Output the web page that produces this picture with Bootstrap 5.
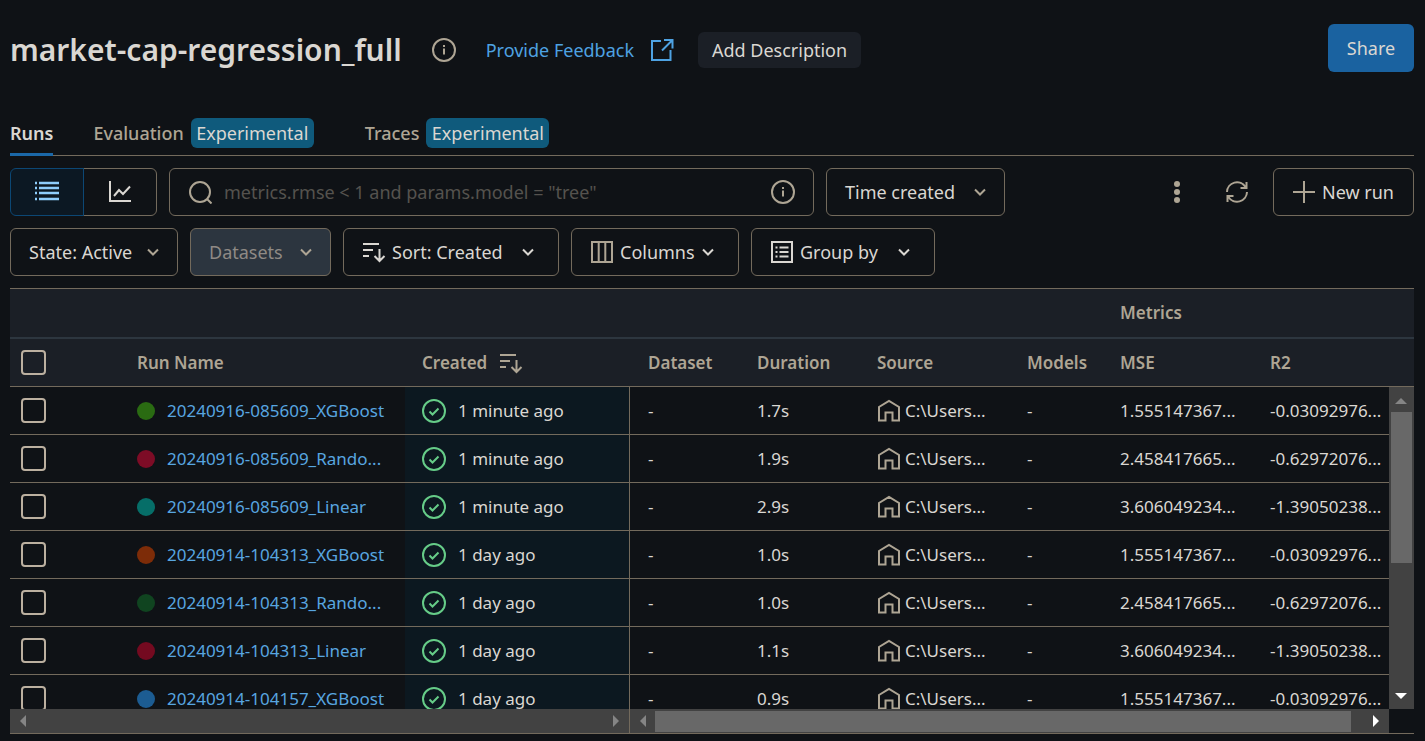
<!DOCTYPE html>
<html lang="en">
<head>
<meta charset="utf-8">
<meta name="viewport" content="width=device-width, initial-scale=1">
<title>market-cap-regression_full</title>
<link href="https://cdn.jsdelivr.net/npm/bootstrap@5.3.0/dist/css/bootstrap.min.css" rel="stylesheet">
<style>
:root{--page:#0f1216;--panel:#1b1f26;--line:#736a5c;--ink:#dad7d2;--dim:#aea594;--sky:#4ea2e2}
body{background:var(--page);color:var(--ink);font-family:"Noto Sans","Open Sans",sans-serif;font-size:18px;line-height:24px}
.page{padding:24px 11px 7px 10px;height:100vh}
.page > *{flex-shrink:0}
svg{flex:none;fill:none;stroke:currentColor;stroke-width:2}
.ico{width:24px;height:24px}
.chev{width:12px;height:24px}
.dim{color:var(--dim)}
.page-title{font-size:30px;line-height:48px;font-weight:600;margin:0 30px 0 0}
.top-row{height:52px}
.feedback{color:var(--sky);text-decoration:none;margin-left:30px;gap:16px}
.btn{--bs-btn-font-size:18px;--bs-btn-line-height:24px;--bs-btn-color:var(--ink);--bs-btn-border-radius:6px;--bs-btn-hover-color:#fff;white-space:nowrap}
.btn-desc{background:var(--panel);padding:6px 11px;margin-left:24px;height:36px;width:163px}
.btn-share{background:#1a62a0;height:48px;width:86px}
.tool{border:1px solid var(--line);height:48px;padding:0 18px;display:flex;align-items:center;gap:6px}
.tool .chev{margin-left:auto}
.tool.inset{padding-right:24px}
.tool:disabled{background:#2c353f;border-color:var(--line);color:#8f8a85;opacity:1}
.w-s{width:141px}.w-m{width:168px}.w-l{width:179px}.w-g{width:184px}.w-xl{width:216px}
.tools,.filters{gap:12px;margin-top:12px}
.actions > .tool{margin-left:6px}
.tabs{height:80px;border-bottom:1px solid var(--line);align-items:flex-end;gap:40px}
.tabs .nav-link{padding:0;height:42px;color:var(--dim);display:flex;align-items:center;gap:7px;font-weight:500;border-bottom:3px solid transparent;margin-right:11px}
.tabs .nav-link.active{color:var(--ink);border-color:#1b68a8;margin-right:0;margin-bottom:-1px;height:43px;font-weight:600}
.tabs .tag{background:#0f5a7c;color:var(--ink);border-radius:6px;height:30px;line-height:30px;width:123px;text-align:center;font-weight:400}
.seg .btn{width:74px;height:48px;border:1px solid var(--line);display:flex;align-items:center;justify-content:center}
.seg .btn.on{background:#0c1823;border-color:#0c4774;color:#8fcdfb;z-index:1}
.finder{flex:0 1 645px;border:1px solid var(--line);border-radius:6px;height:48px;padding:0 18px;gap:12px}
.finder input{background:none;border:0;color:var(--ink);flex:1;min-width:0;outline:0;padding:0}
.finder input::placeholder{color:#55524e;opacity:1}
.icon-btn{width:60px;padding:0;height:48px;display:flex;align-items:center;justify-content:center;color:var(--dim)}
.grid-wrap{border-top:1px solid var(--line);border-bottom:1px solid var(--line);margin-top:12px;min-height:0;flex:1 1 0}
.runs{table-layout:fixed;width:100%;border-collapse:separate;border-spacing:0}
.runs th,.runs td{height:48px;padding:0 8px 0 18px;border-bottom:1px solid var(--line);overflow:hidden;white-space:nowrap;text-overflow:ellipsis;vertical-align:middle;font-size:17px}
.runs th{background:var(--panel);color:var(--dim);font-weight:600}
.runs thead tr:first-child th{height:50px;border-bottom:2px solid #2d363f}
.runs .c-check{padding:0 0 0 11px;line-height:0}
.runs .c-name{padding:0 12px}
.runs .c-made{padding:0 17px}
.runs td.c-made{background:#0c1820;border-right:1px solid var(--line)}
.runs a{color:#58a6e0;text-decoration:none}
.runs .form-check-input{width:25px;height:25px;margin:0;background:none;border:2px solid #bcb0a0;border-radius:4px}
.dot{width:18px;height:18px;border-radius:50%;flex:none}
.ok{color:#66cc88}
.vbar{position:absolute;top:98px;right:0;bottom:0;width:25px;background:#424242}
.vbar .thumb{width:21px;height:151px;background:#686868;margin-top:25px;margin-left:2px}
.vbar svg,.hbar svg{fill:currentColor;stroke:none;width:12px;height:12px;color:#858585}
.vbar svg{position:absolute;left:6px}
.vbar .up{top:8px}.vbar .down{bottom:7px}
.vbar svg.down,.hbar svg.end{color:#fff}
.hbar{height:25px;margin-right:25px}
.hbar > div{background:#424242;align-items:center;padding:0 7px;height:24px}
.hbar .pinned{width:620px;border-right:1px solid var(--line)}
.hbar .thumb{background:#686868;height:21px;margin:0 19px 0 6px}
</style>
</head>
<body>
<svg class="d-none">
 <symbol id="info" viewBox="0 0 24 24"><circle cx="12" cy="12" r="11"/><path d="M12 10.500v6M12 7v2"/></symbol>
 <symbol id="chev" viewBox="0 0 12 24"><path d="M1 9.500l5 5 5-5"/></symbol>
 <symbol id="sort" viewBox="0 0 24 24"><path d="M1 4h16M1 10h10M1 16h6M17.500 9v11.500M12.500 16l5 5 5-5"/></symbol>
 <symbol id="check" viewBox="0 0 24 24"><circle cx="12" cy="12" r="11"/><path d="M7.500 12.500l3 3 6-6"/></symbol>
 <symbol id="home" viewBox="0 0 24 24"><path d="M2 21.500V8L12 2l10 6v13.500h-6.500v-8h-7v8z"/></symbol>
 <symbol id="left" viewBox="0 0 12 12"><path d="M9 0v12L3 6z"/></symbol>
 <symbol id="right" viewBox="0 0 12 12"><path d="M3 0v12l6-6z"/></symbol>
</svg>
<div class="page d-flex flex-column">
 <header class="top-row d-flex align-items-center">
  <h1 class="page-title">market-cap-regression_full</h1>
  <svg class="ico dim"><use href="#info"/></svg>
  <a href="#" class="feedback d-flex align-items-center">Provide Feedback
   <svg class="ico" viewBox="0 0 24 24"><path d="M11 3H2v19h18.500V12M14 2h8.500v8.500M22 2.500L12 12.500"/></svg></a>
  <button class="btn btn-desc border-0">Add Description</button>
  <button class="btn btn-share border-0 ms-auto align-self-start">Share</button>
 </header>
 <nav class="tabs nav flex-nowrap">
  <a class="nav-link active" href="#">Runs</a>
  <a class="nav-link" href="#">Evaluation <span class="tag">Experimental</span></a>
  <a class="nav-link" href="#">Traces <span class="tag">Experimental</span></a>
 </nav>
 <div class="tools d-flex">
  <div class="seg btn-group flex-shrink-0">
   <button class="btn on" aria-label="Table view"><svg class="ico" viewBox="0 0 24 24"><path d="M0 3h2M4 3h20M0 8h2M4 8h20M0 13h2M4 13h20M0 19h2M4 19h20" stroke-width="2.400"/></svg></button>
   <button class="btn" aria-label="Chart view"><svg class="ico" viewBox="0 0 24 24"><path d="M2 1v20h21M6 16l5-6 4 4 7-7.500"/></svg></button>
  </div>
  <div class="finder d-flex align-items-center">
   <svg class="ico dim" viewBox="0 0 24 24"><circle cx="12" cy="12" r="10"/><path d="M19 19l4.500 4.500"/></svg>
   <input type="text" aria-label="Search runs" placeholder='metrics.rmse &lt; 1 and params.model = "tree"'>
   <svg class="ico dim"><use href="#info"/></svg>
  </div>
  <button class="btn tool w-l flex-shrink-0">Time created <svg class="chev dim"><use href="#chev"/></svg></button>
  <div class="actions d-flex ms-auto">
   <button class="btn icon-btn border-0" aria-label="More"><svg class="ico" viewBox="0 0 24 24"><g fill="currentColor" stroke="none"><circle cx="12" cy="4" r="3"/><circle cx="12" cy="12" r="3"/><circle cx="12" cy="20" r="3"/></g></svg></button>
   <button class="btn icon-btn border-0" aria-label="Refresh"><svg class="ico" viewBox="0 0 24 24"><path d="M2 12a10 10 0 0 1 18.500-5M22 12a10 10 0 0 1-18.500 5M21.500 2v6h-6M2.500 22v-6h6"/></svg></button>
   <button class="btn tool w-s"><svg class="ico dim" viewBox="0 0 24 24"><path d="M12 1v22M1 12h22"/></svg>New run</button>
  </div>
 </div>
 <div class="filters d-flex">
  <button class="btn tool w-m">State: Active <svg class="chev dim"><use href="#chev"/></svg></button>
  <button class="btn tool w-s" disabled>Datasets <svg class="chev dim"><use href="#chev"/></svg></button>
  <button class="btn tool inset w-xl"><svg class="ico"><use href="#sort"/></svg>Sort: Created <svg class="chev"><use href="#chev"/></svg></button>
  <button class="btn tool inset w-m"><svg class="ico dim" viewBox="0 0 24 24"><path d="M2 2h20v20H2zM8.700 2v20M15.300 2v20"/></svg>Columns <svg class="chev"><use href="#chev"/></svg></button>
  <button class="btn tool inset w-g"><svg class="ico" viewBox="0 0 24 24"><path d="M2 2h20v20H2zM5.500 7.500h2M9.500 7.500h9M5.500 12h2M9.500 12h9M5.500 16.500h2M9.500 16.500h9"/></svg>Group by <svg class="chev"><use href="#chev"/></svg></button>
 </div>
 <div class="grid-wrap d-flex flex-column">
  <div class="position-relative overflow-hidden flex-fill">
   <table class="runs">
    <colgroup><col style="width:115px"><col style="width:280px"><col style="width:225px"><col style="width:109px"><col style="width:120px"><col style="width:150px"><col style="width:93px"><col style="width:150px"><col></colgroup>
    <thead>
     <tr><th colspan="7"></th><th colspan="2">Metrics</th></tr>
     <tr><th class="c-check"><input class="form-check-input" type="checkbox" aria-label="Select all runs"></th><th class="c-name">Run Name</th><th class="c-made"><span class="d-flex align-items-center">Created <svg class="ico ms-2 ps-1 w-auto" viewBox="0 0 24 24" width="24"><use href="#sort"/></svg></span></th><th>Dataset</th><th>Duration</th><th>Source</th><th>Models</th><th>MSE</th><th>R2</th></tr>
    </thead>
    <tbody id="rows"></tbody>
   </table>
   <div class="vbar"><svg class="up" viewBox="0 0 12 12"><path d="M0 9h12L6 3z"/></svg><div class="thumb"></div><svg class="down" viewBox="0 0 12 12"><path d="M0 3h12L6 9z"/></svg></div>
  </div>
  <div class="hbar d-flex align-items-end">
   <div class="pinned d-flex justify-content-between"><svg><use href="#left"/></svg><svg><use href="#right"/></svg></div>
   <div class="d-flex flex-fill"><svg><use href="#left"/></svg><div class="thumb flex-fill"></div><svg class="end"><use href="#right"/></svg></div>
  </div>
 </div>
</div>
<script>
const runs = [
 ["#2a6b12","20240916-085609_XGBoost","1 minute ago","1.7s","1.555147367...","-0.03092976..."],
 ["#7d0c26","20240916-085609_Rando...","1 minute ago","1.9s","2.458417665...","-0.62972076..."],
 ["#066e68","20240916-085609_Linear","1 minute ago","2.9s","3.606049234...","-1.39050238..."],
 ["#7d2c08","20240914-104313_XGBoost","1 day ago","1.0s","1.555147367...","-0.03092976..."],
 ["#104420","20240914-104313_Rando...","1 day ago","1.0s","2.458417665...","-0.62972076..."],
 ["#740a20","20240914-104313_Linear","1 day ago","1.1s","3.606049234...","-1.39050238..."],
 ["#1c5c92","20240914-104157_XGBoost","1 day ago","0.9s","1.555147367...","-0.03092976..."]
];
document.getElementById("rows").innerHTML = runs.map(([color,name,made,time,mse,r2]) => `<tr>
 <td class="c-check"><input class="form-check-input" type="checkbox" aria-label="Select ${name}"></td>
 <td class="c-name"><div class="d-flex align-items-center"><span class="dot me-2" style="background:${color}"></span><a class="ms-1" href="#">${name}</a></div></td>
 <td class="c-made"><div class="d-flex align-items-center"><svg class="ico ok me-2"><use href="#check"/></svg><span class="ms-1">${made}</span></div></td>
 <td>-</td><td>${time}</td>
 <td><div class="d-flex align-items-center"><svg class="ico dim me-1"><use href="#home"/></svg>C:\\Users...</div></td>
 <td>-</td><td>${mse}</td><td>${r2}</td></tr>`).join("");
</script>
<script src="https://cdn.jsdelivr.net/npm/bootstrap@5.3.0/dist/js/bootstrap.bundle.min.js"></script>
</body>
</html>
